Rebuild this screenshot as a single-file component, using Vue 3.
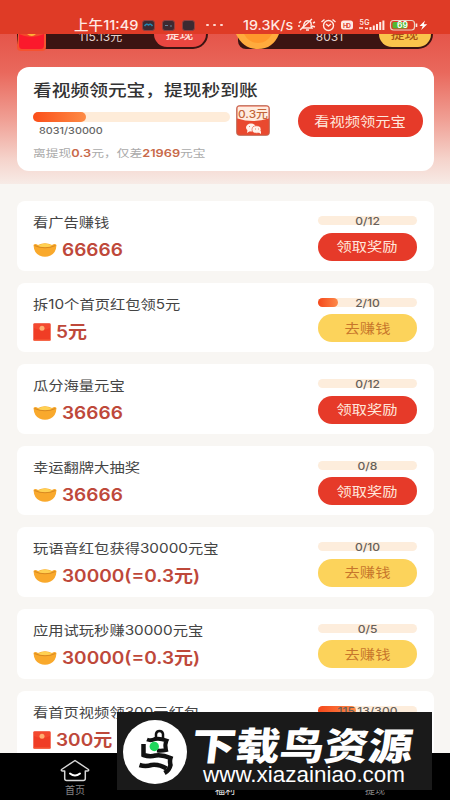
<script setup>
const tasks = [
  { title: '看广告赚钱', icon: 'ingot', amount: '66666', progress: '0/12', pct: 0, ready: true },
  { title: '拆10个首页红包领5元', icon: 'packet', amount: '5元', progress: '2/10', pct: 20, ready: false },
  { title: '瓜分海量元宝', icon: 'ingot', amount: '36666', progress: '0/12', pct: 0, ready: true },
  { title: '幸运翻牌大抽奖', icon: 'ingot', amount: '36666', progress: '0/8', pct: 0, ready: true },
  { title: '玩语音红包获得30000元宝', icon: 'ingot', amount: '30000(=0.3元)', progress: '0/10', pct: 0, ready: false },
  { title: '应用试玩秒赚30000元宝', icon: 'ingot', amount: '30000(=0.3元)', progress: '0/5', pct: 0, ready: false },
  { title: '看首页视频领300元红包', icon: 'packet', amount: '300元', progress: '115.13/300', pct: 38, ready: false },
]
</script>

<template>
  <div class="screen">
    <header class="status">
      <div class="clock"><span class="wide">上午11:49</span></div>
      <div class="apps">
        <svg v-for="n in 3" :key="n" width="13" height="11" viewBox="0 0 13 11">
          <rect x=".5" y=".5" width="12" height="10" rx="2.5" fill="#3d2a31" stroke="#8c4141" />
          <path v-if="n === 1" d="M2.5 6q2-3 4-1q2-2 4 1" fill="none" stroke="#2488b3" stroke-width="1.5" />
          <path v-if="n === 2" d="M3 5.5h3M8 6h2" stroke="#668399" stroke-width="1.2" />
        </svg>
      </div>
      <div class="dots"><i></i><i></i><i></i></div>
      <div class="speed"><span class="wide">19.3K/s</span></div>
      <svg class="sys" width="132" height="16" viewBox="298 17 132 16" fill="none" stroke="#ffe9e3" stroke-width="1.4">
        <path d="M302 28q2-1 2-4q1-4 5-3q3 1 2 5l1 2zM306 30h3M300 30L312 19M299 23l2-2M298 26h2M313 23l2-1M312 26l3 1" />
        <circle cx="328.500" cy="25.500" r="5" />
        <path d="M326 24l2.500 2l2.500-2M321.500 22l3-2.500M335.500 22l-3-2.500" />
        <rect x="341" y="20.500" width="12" height="9" rx="2.500" fill="#ffe9e3" stroke="none" />
        <text x="343" y="27.500" font-size="6.500" font-weight="700" fill="#df4932" stroke="none" textLength="8">HD</text>
        <text x="359.500" y="24.500" font-size="7" font-weight="600" fill="#ffe9e3" stroke="none" textLength="10">5G</text>
        <path d="M359 28h4M365 28.500h3" stroke-width="1.500" />
        <path d="M370.500 30v-3M373.800 30v-4.500M377 30v-6M380.200 30v-8M383.400 30v-9.500" stroke-width="2" />
        <rect x="390.500" y="20.500" width="24" height="9.500" rx="3" stroke="#e9d2c3" stroke-width="1.200" />
        <rect x="392.500" y="22" width="15" height="6.500" rx="1.500" fill="#54b82f" stroke="none" />
        <path d="M416.500 23.500v3.500" stroke-width="1.600" />
        <text x="397" y="28.300" font-size="8.500" font-weight="600" fill="#fff" stroke="none" textLength="11">69</text>
        <path d="M425 20.500l-5.500 5.500h3.200l-1.500 4l6-5.700h-3.400z" fill="#fff" stroke="none" />
      </svg>
    </header>

    <section class="hero">
      <div class="wallets">
        <div class="wallet">
          <svg class="wallet-packet" width="30" height="17" viewBox="0 0 30 17">
            <path d="M1 0h28v13q0 4-4 4H4q-4 0-4-4z" fill="#f6522f" />
            <path d="M2 0h25v11q0 4-3 4H5q-3 0-3-4z" fill="#fb192c" />
            <path d="M2 0q12 6 25 0" fill="#f3482c" />
            <path d="M10 0q5 4 9 0z" fill="#ffb339" />
          </svg>
          <span class="wallet-value">115.13元</span>
          <span class="wallet-btn red"><b>提现</b></span>
        </div>
        <div class="wallet second">
          <svg class="wallet-coin" width="44" height="15" viewBox="0 0 44 15">
            <path d="M0 0h43Q37 15 22 15T0 0z" fill="#ffab3d" />
            <path d="M8 0h28Q31 9 22 9T8 0z" fill="#ff982c" />
          </svg>
          <span class="wallet-value">8031</span>
          <span class="wallet-btn gold"><b>提现</b></span>
        </div>
      </div>

      <div class="cash">
        <div class="cash-info">
          <h1><span class="wide">看视频领元宝，提现秒到账</span></h1>
          <div class="cash-track"><div class="cash-fill"></div></div>
          <div class="cash-count"><span class="wide">8031/30000</span></div>
          <p><span class="wide">离提现<b>0.3</b>元，仅差<b>21969</b>元宝</span></p>
        </div>
        <svg class="gift" width="34" height="31" viewBox="0 0 34 31">
          <rect x=".7" y=".7" width="32.600" height="29.600" rx="2.500" fill="#e9492f" stroke="#bd6854" />
          <path d="M1.500 3q0-1.500 1.500-1.500h28q1.500 0 1.500 1.500v10.500q-15.500 5-31 0z" fill="#ffede1" />
          <text x="2" y="12.500" font-size="11" font-weight="500" fill="#c4663c" textLength="30" lengthAdjust="spacingAndGlyphs">0.3元</text>
          <ellipse cx="15" cy="22.500" rx="5" ry="4" fill="#fff3ec" />
          <ellipse cx="20.500" cy="24.500" rx="4.500" ry="3.700" fill="#fff3ec" stroke="#e9492f" stroke-width=".6" />
          <path d="M11.500 25l-.5 3l3-2zM22 27l3 2v-3z" fill="#fff3ec" />
          <path d="M13 21.500h1M17 21.500h1M19 24h1M22 24h1" stroke="#e98671" />
        </svg>
        <button class="watch"><span class="wide">看视频领元宝</span></button>
      </div>
    </section>

    <main class="list">
      <article v-for="t in tasks" :key="t.title" class="task">
        <div class="task-info">
          <h2><span class="wide">{{ t.title }}</span></h2>
          <div class="reward">
            <svg v-if="t.icon === 'ingot'" width="24" height="16" viewBox="0 0 24 16">
              <path d="M.5 3Q2 1 5 3Q12-.5 19 3q3-2 4.500 0Q23 11 17.500 13.500Q12 16 6.500 13.500Q1 11 .5 3z" fill="#f9a92c" />
              <path d="M4.500 4Q12-1 19.500 4Q12 7 4.500 4z" fill="#ffd152" />
              <path d="M1.500 3.500Q12 8 22.500 3.500" fill="none" stroke="#d98a22" stroke-width="1.100" />
            </svg>
            <svg v-else width="18" height="18" viewBox="0 0 18 18">
              <rect x=".3" y=".3" width="17.400" height="17.400" rx="1.300" fill="#f03d25" />
              <path d="M1 1h16v4Q9 9 1 5z" fill="#f4492f" />
              <circle cx="9" cy="5.300" r="2.500" fill="#ffad70" />
              <path d="M.5 17h17" stroke="#f8623a" stroke-width="1" />
            </svg>
            <strong><span class="wide">{{ t.amount }}</span></strong>
          </div>
        </div>
        <div class="task-side">
          <div class="track">
            <div class="fill" :style="{ width: t.pct + '%' }"></div>
            <span class="track-text">{{ t.progress }}</span>
          </div>
          <button :class="['act', { ready: t.ready }]"><span class="wide">{{ t.ready ? '领取奖励' : '去赚钱' }}</span></button>
        </div>
      </article>
    </main>

    <nav class="tabs">
      <div class="tab">
        <svg width="30" height="23" viewBox="0 0 30 23" fill="none" stroke="#d8d8d8" stroke-width="1.500" stroke-linejoin="round" stroke-linecap="round">
          <path d="M15 1.500L1.500 10.500q-.5 1.500 1 1.500h2.200v7.500q0 2 2 2h16.600q2 0 2-2V12h2.200q1.500 0 1-1.500z" />
          <path d="M10 14.500q5 4 10 0" stroke="#fff" stroke-width="2" />
        </svg>
        <span>首页</span>
      </div>
      <div class="tab active"><span>福利</span></div>
      <div class="tab"><span>提现</span></div>
    </nav>

    <svg class="brand" width="315" height="78" viewBox="0 0 315 78">
      <rect width="315" height="78" fill="#1a1a1a" />
      <circle cx="38" cy="40" r="32" fill="#fff" />
      <g fill="none" stroke="#111">
        <path d="M39 26v-4q.5-3 3.500-3t3.500 3v5" stroke-width="2.500" />
        <path d="M30 27.500q4 1.500 8-.5q5-1 11.500 1.500q-2 4-.5 9.500q-4 1-9 .5" stroke-width="4" />
        <path d="M26.500 32v11q6 2 12 .5q7-1 15 2.500q-1 3 0 7q-1 5-6 8" stroke-width="4.500" />
        <path d="M22.500 53q6 2 12 0q7-1 15 3.500" stroke-width="4.500" />
      </g>
      <circle cx="37.300" cy="34.500" r="4.700" fill="#20d65c" />
      <text class="brand-name" x="74" y="48" textLength="221" lengthAdjust="spacingAndGlyphs" transform="translate(5 0) skewX(-7)">下载鸟资源</text>
      <text class="brand-url" x="86" y="70" textLength="202" lengthAdjust="spacingAndGlyphs">www.xiazainiao.com</text>
    </svg>
  </div>
</template>

<style>
body { margin: 0; overflow: hidden; }
</style>

<style scoped>
.screen {
  position: relative;
  width: 450px;
  height: 800px;
  overflow: hidden;
  display: flex;
  flex-direction: column;
  background: #f8f6f3;
  font-family: Inter, "Noto Sans CJK SC", sans-serif;
  color: #444;
}
.wide {
  display: inline-block;
  white-space: nowrap;
  transform: scaleX(1.175);
  transform-origin: left center;
}
button {
  border: 0;
  padding: 0 0 2px;
  box-sizing: border-box;
  font-family: inherit;
  display: flex;
  align-items: center;
  justify-content: center;
}
button .wide { transform-origin: center; }
h1, h2, p { margin: 0; }

.status {
  flex: none;
  display: flex;
  align-items: center;
  height: 18px;
  padding: 16px 0 0 74px;
  background: #df3b26;
  color: #ffe9e3;
}
.clock { width: 68px; font-size: 13.5px; font-weight: 500; line-height: 18px; }
.clock .wide { transform: scaleX(1.08); }
.apps { display: flex; gap: 7px; width: 64px; }
.dots { display: flex; gap: 4.500px; width: 37px; }
.dots i { width: 2.500px; height: 2.500px; border-radius: 50%; background: #ffd9d0; }
.speed { width: 55px; font-size: 13px; font-weight: 500; line-height: 18px; }
.speed .wide { transform: scaleX(1.1); }
.sys { flex: none; }

.hero {
  flex: none;
  height: 150px;
  background: linear-gradient(#e5554a 0, #e9685c 38px, #f0a095 86px, #f5d3cb 125px, #f7ebe6 150px);
}
.wallets { display: flex; height: 15px; padding-left: 17px; }
.wallet {
  display: flex;
  width: 191px;
  height: 15px;
  background: #3b1412;
  border-radius: 0 0 15px 8px;
}
.wallet.second { margin-left: 30px; width: 195px; }
.wallet-packet { flex: none; }
.wallet-coin { flex: none; margin-left: -2px; }
.wallet-value {
  flex: 1;
  height: 9px;
  overflow: hidden;
  display: flex;
  align-items: flex-end;
  justify-content: center;
  line-height: 13px;
  font-size: 12px;
  color: #e4d2cd;
}
.wallet-btn {
  flex: none;
  width: 52px;
  height: 13px;
  margin-right: 2px;
  border-radius: 0 0 14px 14px;
  overflow: hidden;
  display: flex;
  justify-content: center;
  align-items: flex-end;
}
.wallet-btn b { font-size: 12.500px; line-height: 18px; font-weight: 500; margin-bottom: 3px; transform: scaleX(1.1); }
.red { background: #e94640; color: #ffe1da; }
.gold { background: #fac44c; color: #a75114; }

.cash {
  display: flex;
  width: 417px;
  height: 104px;
  margin: 18px 0 0 16.500px;
  border-radius: 12px;
  background: #fff;
}
.cash-info { width: 219px; padding-left: 16.500px; flex: none; box-sizing: border-box; }
h1 { margin-top: 12px; font-size: 16px; line-height: 22px; font-weight: 500; color: #333; }
h1 .wide { transform: scaleX(1.17); }
.cash-track { width: 197px; height: 10.500px; margin-top: 10.500px; border-radius: 6px; background: #feecd9; }
.cash-fill { width: 53px; height: 10.500px; border-radius: 6px; background: linear-gradient(90deg, #fb4e19, #fd8b45); }
.cash-count { margin: 2px 0 0 5.500px; font-size: 9.500px; line-height: 14px; font-weight: 500; color: #666; }
.cash-count .wide { transform: scaleX(1.14); }
p { margin-top: 8px; font-size: 10.500px; line-height: 16px; color: #aaa; }
p .wide { transform: scaleX(1.215); }
p b { color: #c8694a; font-weight: 600; }
.gift { flex: none; margin-top: 38px; }
.watch {
  width: 125px;
  height: 32px;
  margin: 38px 0 0 28px;
  border-radius: 16px;
  background: #e63a29;
  color: #ffe7dc;
  font-size: 13px;
  flex: none;
}

.list {
  flex: 1;
  min-height: 0;
  overflow: hidden;
  display: flex;
  flex-direction: column;
  gap: 12px;
  padding: 17px 16.500px 0;
}
.task {
  flex: none;
  display: flex;
  justify-content: space-between;
  height: 69.600px;
  box-sizing: border-box;
  padding: 0 16.500px;
  border-radius: 8px;
  background: #fff;
}
h2 { margin-top: 12px; font-size: 13px; line-height: 19px; font-weight: 400; color: #444; }
.reward { display: flex; align-items: center; gap: 5px; height: 24px; margin-top: 6px; }
.reward strong { font-size: 17px; line-height: 24px; font-weight: 600; color: #be483a; }
.reward .wide { transform: scaleX(1.12); }
.task-side { width: 99px; padding-top: 15px; }
.track {
  position: relative;
  height: 9px;
  border-radius: 5px;
  background: #fdeddc;
  display: flex;
  align-items: center;
}
.fill { height: 9px; border-radius: 5px; background: linear-gradient(90deg, #f5481b, #fd8949); }
.track-text {
  position: absolute;
  inset: 0;
  text-align: center;
  line-height: 11px;
  font-size: 10.500px;
  font-weight: 500;
  color: #66605a;
  transform: scaleX(1.15);
}
.act {
  width: 99px;
  height: 28px;
  margin-top: 7.500px;
  border-radius: 14px;
  font-size: 13px;
  background: #fcd35b;
  color: #c7762b;
}
.act.ready { background: #e63a29; color: #ffe7dc; }

.tabs {
  flex: none;
  display: flex;
  height: 47px;
  background: #000;
}
.tab {
  flex: 1;
  display: flex;
  flex-direction: column;
  align-items: center;
  justify-content: flex-end;
  font-size: 10px;
  line-height: 14px;
  color: #888;
  padding-bottom: 3px;
}
.tab svg { margin-bottom: 1px; }
.tab.active { color: #eee; }
.brand { position: absolute; left: 117px; top: 712px; }
.brand-name { font-family: "Noto Sans CJK SC", sans-serif; font-size: 38px; font-weight: 900; fill: #fff; }
.brand-url { font-family: "Liberation Sans", sans-serif; font-size: 22px; fill: #fff; }
</style>
